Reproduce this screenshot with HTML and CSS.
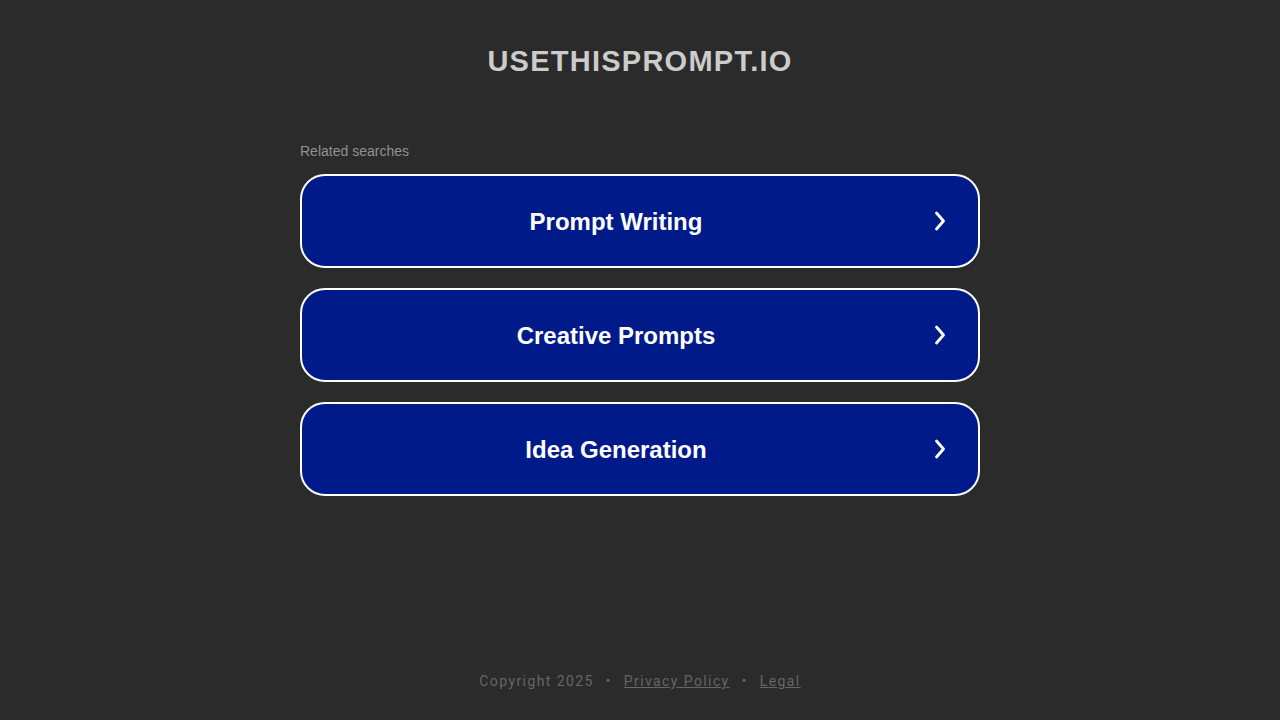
FILE: index.html
```html
<!DOCTYPE html>
<html>
<head>
<meta charset="utf-8">
<link rel="stylesheet" href="styles.css">
</head>
<body>
<div class="page">
  <header class="header">
    <h1 class="domain">USETHISPROMPT.IO</h1>
  </header>
  <main class="main">
    <div class="related">
      <p class="label">Related searches</p>
      <a class="btn" href="#"><span class="btn-text">Prompt Writing</span><svg class="chev" viewBox="0 0 16 24" width="16" height="24"><path d="M4.5 4 L11.5 12 L4.5 20" fill="none" stroke="#fff" stroke-width="2.8" stroke-linecap="round" stroke-linejoin="round"/></svg></a>
      <a class="btn" href="#"><span class="btn-text">Creative Prompts</span><svg class="chev" viewBox="0 0 16 24" width="16" height="24"><path d="M4.5 4 L11.5 12 L4.5 20" fill="none" stroke="#fff" stroke-width="2.8" stroke-linecap="round" stroke-linejoin="round"/></svg></a>
      <a class="btn" href="#"><span class="btn-text">Idea Generation</span><svg class="chev" viewBox="0 0 16 24" width="16" height="24"><path d="M4.5 4 L11.5 12 L4.5 20" fill="none" stroke="#fff" stroke-width="2.8" stroke-linecap="round" stroke-linejoin="round"/></svg></a>
    </div>
  </main>
  <footer class="footer">
    <span>Copyright 2025</span><span class="dot">•</span><a href="#">Privacy Policy</a><span class="dot">•</span><a href="#">Legal</a>
  </footer>
</div>
</body>
</html>
```
FILE: styles.css
```css
html, body {
  margin: 0;
  padding: 0;
  background: #2b2b2b;
  height: 100%;
}
.page {
  height: 720px;
  display: flex;
  flex-direction: column;
  align-items: center;
  font-family: "Liberation Sans", Arial, sans-serif;
}
.header {
  padding-top: 41px;
}
.domain {
  margin: 0;
  font-size: 29px;
  font-weight: bold;
  letter-spacing: 1.25px;
  color: #cccccc;
  line-height: 40px;
}
.main {
  margin-top: 62px;
  width: 680px;
}
.related {
  display: flex;
  flex-direction: column;
  gap: 20px;
}
.label {
  margin: 0 0 -5px 0;
  font-size: 14px;
  color: #919191;
  line-height: 16px;
}
.btn {
  height: 90px;
  border: 2px solid #ffffff;
  border-radius: 25px;
  background: #011a8a;
  display: flex;
  align-items: center;
  justify-content: center;
  position: relative;
  text-decoration: none;
}
.btn-text {
  color: #ffffff;
  font-size: 24px;
  font-weight: bold;
  margin-left: -48px;
  padding-top: 2px;
}
.chev {
  position: absolute;
  right: 30px;
  top: 33px;
}
.footer {
  margin-top: auto;
  padding-bottom: 31px;
  font-family: Roboto, "Liberation Sans", sans-serif;
  font-size: 14px;
  letter-spacing: 1.4px;
  color: #666666;
  display: flex;
  gap: 0;
}
.footer a {
  color: #666666;
}
.dot {
  margin: 0 12px;
}
```
